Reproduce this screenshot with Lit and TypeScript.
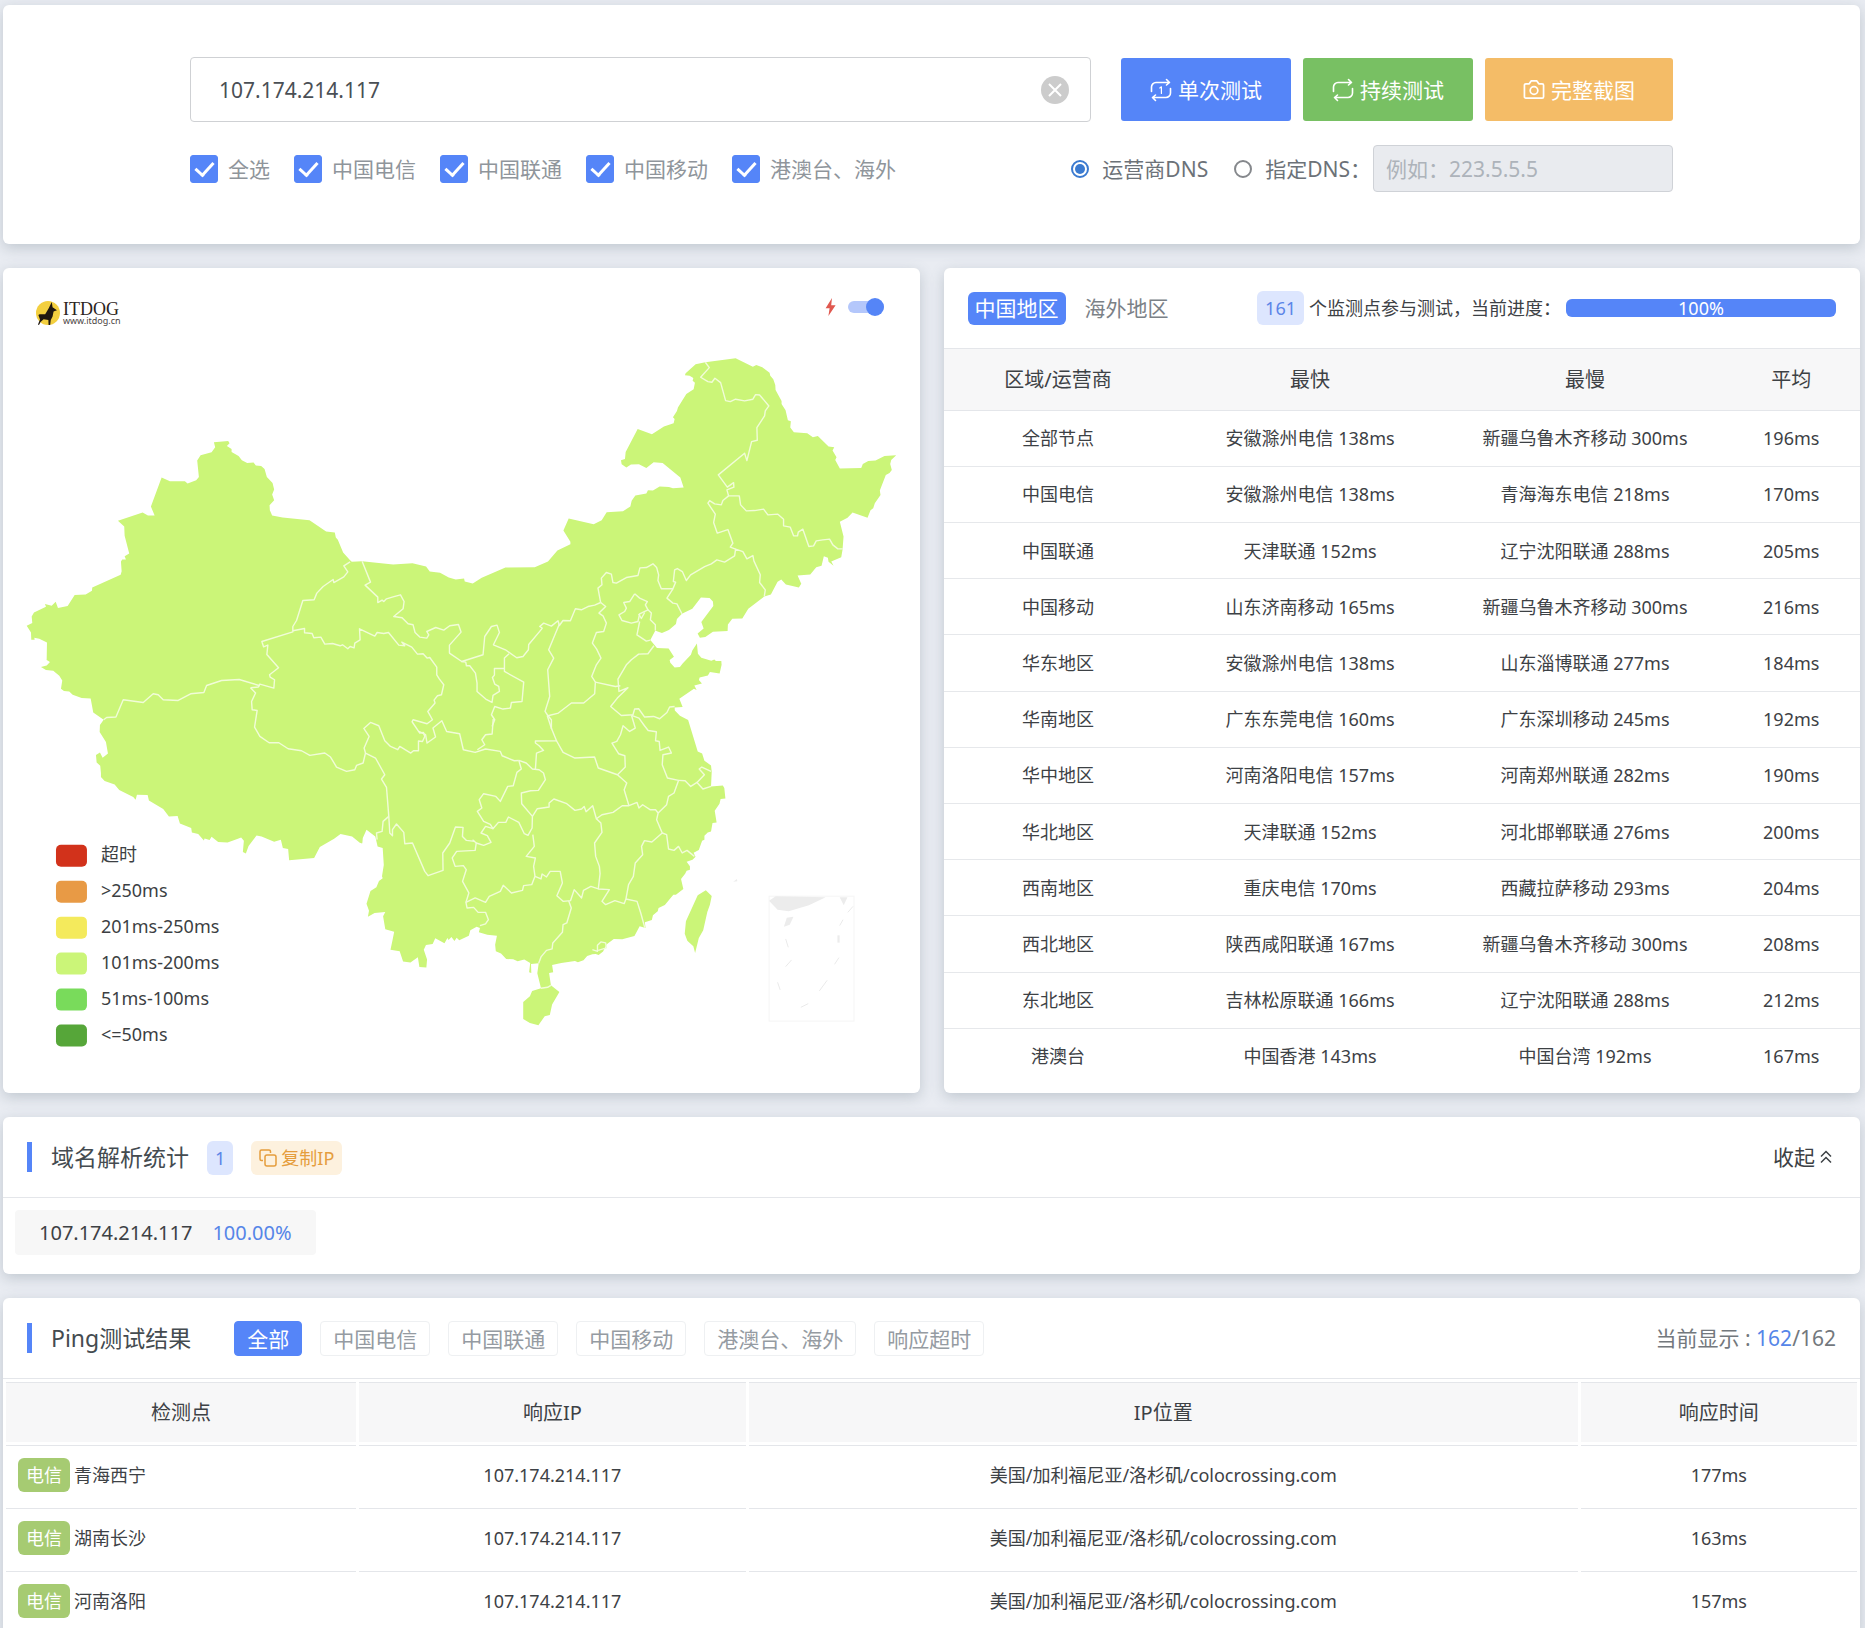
import { LitElement, html, svg, css } from "lit";
import { customElement, state } from "lit/decorators.js";

/* ---------- Map geometry: boundaries are digitised tile by tile ---------- */

interface Tile { x: number; y: number; sx: number; sy: number; }

const NW: Tile = { x: -3, y: -8, sx: 1 / 3, sy: 1 / 3 };
const NE: Tile = { x: 457, y: 62, sx: 1 / 3, sy: 1 / 3 };
const SW: Tile = { x: -3, y: 372, sx: 1 / 3, sy: 1 / 3 };
const SE: Tile = { x: 357, y: 412, sx: 1 / 2.7034, sy: 1 / 3 };

const trace = (t: Tile, points: string): string =>
  points
    .trim()
    .split(/\s+/)
    .map((p) => {
      const [x, y] = p.split(",").map(Number);
      return `${(t.x + x * t.sx).toFixed(1)},${(t.y + y * t.sy).toFixed(1)}`;
    })
    .join(" ");

const MAINLAND = [
  trace(NW, `140,1200 141,1148 118,1137 103,1134 104,1140 94,1140 93,1118 80,1098 97,1090 95,1070 102,1058
    138,1041 135,1033 155,1038 167,1026 174,1045 203,1039 224,1006 257,1004 276,993 277,983 362,945 365,934
    363,905 367,899 378,899 374,889 388,881 374,828 373,800 354,783 428,758 444,767 464,767 453,740 485,653
    510,664 555,664 563,671 589,661 597,651 592,602 602,586 635,577 646,562 642,547 685,543 689,550 681,558
    695,567 695,576 716,588 726,601 742,609 761,608 768,617 784,618 794,627 801,651 818,669 823,689 817,704
    823,721 809,736 810,751 817,767 848,773 929,781 979,815 1005,818 1008,833 1014,840 1030,878 1051,901
    1056,906 1087,904 1180,914 1238,910 1279,920 1290,935 1321,939 1347,953 1368,959 1393,956 1395,965 1419,971`),
  trace(NE, `39,761 66,744 137,713 225,712 265,695 293,662 332,643 332,636 311,602 327,566 402,583 426,571
    441,547 490,544 512,530 516,513 527,497 560,491 565,481 580,482 600,470 628,471 640,475 672,473 662,443
    609,399 582,397 560,414 538,403 514,404 500,413 486,403 484,391 496,387 498,366 534,297 577,313 613,290
    642,280 645,267 640,262 652,243 655,233 680,192 702,178 706,158 699,152 701,144 690,137 676,136 678,130
    708,103 737,97 828,85 880,110 890,105 908,112 930,128 932,137 941,148 947,165 948,180 966,213 966,222
    978,241 985,271 994,274 992,293 1003,307 1043,310 1060,322 1075,318 1107,350 1124,352 1119,362 1131,382
    1127,390 1141,416 1205,414 1210,402 1226,393 1248,392 1275,378 1310,376 1295,390 1292,402 1297,420
    1290,429 1279,435 1261,482 1263,495 1246,520 1241,535 1233,541 1224,564 1179,548 1164,564 1141,576
    1152,620 1149,660 1145,682 1115,695 1122,708 1107,696 1105,684 1093,679 1086,708 1070,712 1052,734
    1014,737 1025,762 1018,773 979,764 965,749 954,756 934,794 914,800 866,837 848,866 818,867 805,884
    804,904 760,906 737,922 721,924 714,911 732,896 725,877 761,829 760,815 750,805 724,803 698,837 667,852
    652,868 649,883 628,901 607,910 594,905 587,902 572,931 592,955 627,956 643,981 630,991 632,999 645,1013
    661,1012 669,1001 694,975 698,962 712,941 715,972 725,984 755,993 764,989 769,994 785,994 786,1005
    780,1031 751,1027 745,1037 720,1043 718,1051 727,1061 704,1067 711,1081 703,1077 659,1107 669,1132
    645,1133`),
  trace(SE, `852,92 866,108 888,121 914,215 926,221 932,243 950,257 952,275 950,320 982,317 986,325 989,356
    976,358 973,372 960,393 965,428 954,430 950,455 941,458 932,468 932,480 926,483 917,511 903,519 908,531
    900,540 884,546 893,560 893,570 884,573 880,582 869,598 875,628 855,645 848,645 825,676 808,685 806,695
    793,707 790,721 771,728 773,745 757,740 743,769 710,779 687,778 668,794 658,816 646,826 638,823 629,824
    615,829 605,842 590,848 582,844 545,850 520,856 523,878 512,880 517,917 540,937 520,975 514,1006 500,1010
    483,1037 460,1030 442,1018 442,967 460,950 466,934 490,926 480,881 484,851 463,853 464,880 458,878
    461,850 445,840 427,845 415,839 396,838 382,822 368,815 366,795 371,768 345,765 322,758 325,745 316,741
    299,752 295,768 269,782 262,774 256,784 248,772 240,781 237,775 229,791 204,776 197,793 179,796 173,810
    182,840 180,864 161,862 157,833 137,849 117,846 108,815 83,810 88,783 93,756 69,749 63,710 69,697 40,700
    22,711 25,693 18,672 29,634 45,623 52,604 62,596 60,590 65,556 62,505 48,500 42,470 18,450 8,475 7,488`),
  trace(SW, `1087,611 1080,609 1057,590 1022,583 1003,597 960,622 943,655 868,662 865,628 849,625 843,600
    823,606 785,590 770,587 746,619 738,641 729,637 732,603 724,593 706,600 683,608 655,607 635,591 629,601
    614,596 612,602 595,583 576,578 574,565 540,551 533,529 507,530 490,508 447,482 443,466 411,465 407,480
    400,472 358,451 344,434 314,424 303,412 303,400 301,378 290,368 288,346 300,338 308,354 324,341 318,307
    299,277 300,256 311,240 280,218 272,176 245,175 218,165 208,155 192,154 183,147 187,122 178,108 160,93
    138,91 123,82 140,77 150,67 139,60`),
].join(" ");

const TAIWAN = trace(SE, `936,632 952,649 947,675 940,697 929,752 917,775 907,820 902,800 886,783 879,762 882,725 914,647`);

const BORDERS: string[] = [
  ...[
    `1051,906 1032,918 1044,936 1032,951 1002,968 1000,959 970,980 951,1000 943,1020 909,1022 890,1082 879,1100 879,1116
     786,1145 791,1161 804,1156 801,1184 836,1224 809,1245 811,1252 824,1260 822,1285 780,1273 775,1282 752,1284`,
    `879,1113 914,1106 914,1119 937,1121 942,1134 963,1132 975,1153 998,1151 1021,1158 1028,1155 1044,1167 1051,1160
     1063,1164 1065,1150 1081,1140 1079,1107 1125,1129 1132,1118 1152,1121 1166,1118 1197,1156 1215,1158 1206,1147
     1236,1162 1253,1183 1270,1182 1282,1195 1290,1193 1311,1222 1311,1245 1319,1258 1332,1275 1325,1305 1313,1308
     1303,1321 1306,1330 1284,1355 1298,1380 1282,1392 1240,1380 1237,1386 1260,1420 1271,1418 1275,1430 1268,1445
     1256,1444 1256,1473 1241,1473 1233,1480 1200,1460 1194,1470 1172,1460 1155,1443 1137,1398 1112,1388 1092,1406
     1108,1430 1093,1465 1097,1480`,
    `1087,904 1112,967 1096,976 1134,1012 1134,1028 1147,1021 1152,1025 1160,1017 1180,1011 1202,1005 1213,1025
     1210,1047 1182,1070 1207,1074 1225,1092 1240,1095 1246,1118 1260,1132 1281,1135 1287,1125 1281,1115 1308,1103
     1332,1111 1350,1098 1376,1094 1384,1117 1349,1156 1349,1180 1386,1205 1450,1185 1455,1130 1475,1100 1492,1096
     1499,1118 1481,1155 1517,1170 1551,1194 1570,1190 1586,1170 1587,1154 1628,1105`,
  ].map((p) => trace(NW, p)),
  ...[
    `248,895 240,890 252,880 275,889 295,873 299,887 310,872 332,873 347,837 365,840 385,830 405,826 423,818`,
    `5,995 18,997 20,1008 30,1008 47,1030 52,1060 52,1085 78,1108 97,1118 100,1097 119,1085 117,1070 105,1063 98,1043
     104,1036 104,1016 134,1016`,
    `148,972 134,985 134,1025 192,1057 187,1115 155,1118 152,1135 130,1138 105,1130 95,1155 105,1170 97,1190`,
    `299,883 267,960 282,985 264,1020 270,1100 256,1145 265,1158 275,1170 275,1198`,
    `265,1158 296,1150 335,1120 372,1120 405,1092 407,1057 396,1040 410,1005 424,985 411,958 398,940 410,908
     432,905 440,880 430,858 418,850 438,830 423,818`,
    `407,1057 467,1070 482,1068`,
    `423,818 415,775 427,765 425,745 440,728 455,733 460,758 470,760 500,743 535,737 541,714 560,713 580,702
     591,713 597,735 595,752 605,777 640,777 648,757 641,755 645,720 653,716 668,725 680,752 693,735 735,710
     755,702 772,690 795,697 825,678 828,658 850,665 862,687 880,677 883,693 902,735 900,758 917,780 914,800`,
    `640,777 622,805 640,820 652,822 667,852`,
    `525,792 540,805 563,815 557,825 565,840 540,852 535,875 515,880 487,872 478,855 495,845 500,835 492,818
     510,815 525,792`,
    `565,840 575,850 572,870 587,885 587,902`,
    `540,875 532,915 560,934 572,931`,
    `537,852 545,866 555,848`,
    `828,658 812,652 820,640 805,599 773,610 762,578 767,553 745,520 750,512 765,522 785,525 790,512 807,498
     839,498 843,525 860,543 885,542 912,538 925,555 955,553 972,568 972,588 992,592 1002,618 1014,618
     1016,607 1030,598 1048,650 1062,648 1070,633 1090,630 1110,628 1120,645 1135,657 1150,657`,
    `807,498 802,480 823,472 822,458 803,472 776,435 855,370 862,392 876,335 893,331 892,293 915,258 917,243
     928,228 900,195 888,194 880,208 855,213 828,208 812,215 798,212 783,158 766,145 757,157 745,155 723,142
     749,113 737,97`,
    `583,948 565,972 537,973 515,990 500,1005 475,1048 478,1085 505,1074 473,1105 453,1130 485,1157 520,1155
     525,1138 537,1137 555,1162 582,1160 600,1167 622,1148 630,1132 645,1130`,
  ].map((p) => trace(NE, p)),
  ...[
    `311,240 320,233 348,232 370,180 430,188 460,162 475,165 490,180 535,182 572,162 612,158 620,137 665,122
     718,119 780,138`,
    `752,144 767,160 755,185 757,210 772,212 764,262 780,290 808,309 837,309 865,327 905,333 930,347 975,340
     992,352 1010,382 1040,395 1065,390 1070,377 1090,370 1097,340 1127,355 1155,405 1145,418 1160,443 1167,530
     1170,580 1178,588 1178,570 1190,553 1212,578 1215,612 1238,610 1275,695 1285,708 1330,692 1329,640
     1350,610 1367,562 1390,563 1388,590 1400,602 1425,605`,
    `1167,530 1150,545 1147,575 1130,580 1132,600`,
  ].map((p) => trace(SW, p)),
  ...[
    `160,155 178,165 182,190 205,172 198,145 222,123 235,155 270,162 280,210 312,218 340,208 380,215 385,228
     418,243 430,242`,
    `361,118 358,163 340,165 330,180 338,195 318,210`,
    `507,107 518,145 532,183 475,184 475,190 485,198 497,212 478,220 475,268`,
    `430,242 450,250 467,268 485,270 497,280 502,300 483,332 462,333 437,340 438,372 467,410 466,445 455,467
     445,462 430,428 402,412 395,428 375,428 360,447 353,434 335,425 318,395 330,385 323,360 335,342 368,350
     380,365 400,320 415,318 425,278 437,268 430,242`,
    `532,183 550,218 582,235 635,232 645,265 697,285 722,310 715,330 728,378`,
    `697,285 718,262 717,228 700,222 682,190 695,185 705,165 712,138 730,155 745,145 735,107`,
    `735,107 755,115 770,138 780,152 802,156 800,183 810,185 812,212 835,202 843,220 820,225 818,255 832,295
     862,302 850,340 835,350 830,375 807,400`,
    `862,302 880,303 895,320 912,308 928,328 950,320`,
    `912,308 932,285 918,268 925,262 950,275`,
    `467,410 480,387 512,382 512,370 525,358 560,372 582,392 600,388 607,380 612,396 630,378 640,417 655,405
     685,398 710,378 728,378 750,368 755,385 765,375 785,390 800,390 807,400 803,420 818,460 790,487 770,483
     762,500 765,525 745,550 740,590 727,615 720,658`,
    `640,417 652,430 655,458 635,490 638,530 648,560 650,582 645,628`,
    `468,465 472,500 450,530 475,535 470,560 474,590`,
    `474,590 490,598 493,583 505,592 515,575 542,575 548,610 533,648 550,665 570,663 580,630 600,655 605,632
     625,620 645,628 675,630 655,665 665,675 690,663 715,672 720,658 750,665 760,700 771,745`,
    `474,590 465,615 443,618 440,632 410,640 388,617 380,635 350,650 340,668 312,655 287,668 290,685 308,683
     320,698 340,698 348,720 340,733 325,738`,
    `287,668 295,640 278,605 288,570 280,558 258,560 250,535 262,515 312,512 315,490 335,497 355,488 345,468
     328,460 340,440 360,447`,
    `305,480 315,490`,
    `565,663 572,685 560,730 550,735 548,758 522,790 520,808 505,812 490,832 484,851`,
    `818,460 830,465 835,508 850,512 862,500 872,520 885,512 905,530`,
    `490,926 508,923 517,917`,
    `629,810 643,815 643,797 652,787 665,790 667,805 645,812`,
  ].map((p) => trace(SE, p)),
];

const INSET_SHAPES = [
  `1107,663 1125,650 1260,653 1215,677 1160,695 1130,690`,
  `1298,653 1319,653 1309,677`,
  `1155,714 1173,711 1163,735 1147,741`,
  `1292,767 1298,767 1298,789 1292,789`,
  `1020,598 1021,605 1010,606`,
].map((p) => trace(SE, p));

const INSET_DASHES = [
  `1334,680 1320,698`,
  `1307,720 1298,738`,
  `1296,834 1284,854`,
  `1264,902 1243,934`,
  `1213,972 1193,983`,
  `1130,908 1137,931`,
  `1152,778 1159,803`,
  `1168,841 1152,861`,
].map((p) => trace(SE, p));

const LEGEND: [string, string][] = [
  ["#d2321b", "超时"],
  ["#e89a45", ">250ms"],
  ["#f4ea5c", "201ms-250ms"],
  ["#cbf578", "101ms-200ms"],
  ["#79db5b", "51ms-100ms"],
  ["#56a639", "<=50ms"],
];

/* ---------- Elements ---------- */

@customElement("latency-map")
export class LatencyMap extends LitElement {
  static styles = css`
    :host { display: block; position: relative; }
    .map { display: block; width: 100%; height: auto; border-radius: 6px; }
    .land { fill: #cbf578; }
    .border { fill: none; stroke: #f1fcd8; stroke-width: 1.4; stroke-linejoin: round; }
    .inset { fill: none; stroke: #f5f5f5; }
    .sea { fill: #ececec; }
    .dash { fill: none; stroke: #eaeaea; }
    .label { font: 18px/1 "Noto Sans", "Noto Sans CJK SC", sans-serif; fill: #3c3f43; }
    .brand { font: 18px/1 "Liberation Serif", serif; fill: #2b2320; }
    .site { font: 9px/1 "Noto Sans", sans-serif; fill: #4a4442; }
    .fast {
      position: absolute; top: 28px; right: 36px;
      display: flex; align-items: center; gap: 12px; height: 21px;
    }
    .toggle {
      appearance: none; margin: 0; width: 36px; height: 12px; border-radius: 6px;
      background: #b4c7fb; display: flex; align-items: center; cursor: pointer;
    }
    .toggle::before {
      content: ""; width: 18px; height: 18px; border-radius: 50%; background: #5585f7; flex: none;
    }
    .toggle:checked { justify-content: flex-end; }
  `;

  render() {
    return html`
      <svg class="map" viewBox="0 0 917 825" role="img" aria-label="中国地区">
        <polygon class="land" points=${MAINLAND}></polygon>
        <polygon class="land" points=${TAIWAN}></polygon>
        ${BORDERS.map((p) => svg`<polyline class="border" points=${p}></polyline>`)}
        <rect class="inset" x="766.5" y="628.5" width="85" height="125"></rect>
        ${INSET_SHAPES.map((p) => svg`<polygon class="sea" points=${p}></polygon>`)}
        ${INSET_DASHES.map((p) => svg`<polyline class="dash" points=${p}></polyline>`)}
        ${LEGEND.map(
          ([color, text], i) => svg`
            <rect x="53" y=${577 + i * 36} width="31" height="22" rx="5" fill=${color}></rect>
            <text class="label" x="98" y=${593 + i * 36}>${text}</text>`
        )}
        <circle cx="45" cy="45" r="12" fill="#f3cf3f"></circle>
        <path
          d="M48.8 34 49.6 39.2 54 42.2 50.6 43.6 49.6 48.6 47.8 52 47.2 57 45.6 57 45.4 52 40.6 51.2 37.6 54 36 57 35 56.6 37 51.6 35.4 47 36.6 46.4 42.2 46.4 45.6 40.4Z"
          fill="#1f1710"
        ></path>
        <text class="brand" x="60" y="47">ITDOG</text>
        <text class="site" x="60" y="56">www.itdog.cn</text>
      </svg>
      <div class="fast">
        <svg width="11" height="18" viewBox="0 0 11 18" aria-hidden="true">
          <path d="M7 0 .6 10.2H4.6L3.4 18 10.6 7.2H6.2Z" fill="#e0584f"></path>
        </svg>
        <input class="toggle" type="checkbox" role="switch" aria-label="快速" checked />
      </div>
    `;
  }
}

const CARRIERS = ["全选", "中国电信", "中国联通", "中国移动", "港澳台、海外"];

const REGIONS = [
  ["全部节点", "安徽滁州电信 138ms", "新疆乌鲁木齐移动 300ms", "196ms"],
  ["中国电信", "安徽滁州电信 138ms", "青海海东电信 218ms", "170ms"],
  ["中国联通", "天津联通 152ms", "辽宁沈阳联通 288ms", "205ms"],
  ["中国移动", "山东济南移动 165ms", "新疆乌鲁木齐移动 300ms", "216ms"],
  ["华东地区", "安徽滁州电信 138ms", "山东淄博联通 277ms", "184ms"],
  ["华南地区", "广东东莞电信 160ms", "广东深圳移动 245ms", "192ms"],
  ["华中地区", "河南洛阳电信 157ms", "河南郑州联通 282ms", "190ms"],
  ["华北地区", "天津联通 152ms", "河北邯郸联通 276ms", "200ms"],
  ["西南地区", "重庆电信 170ms", "西藏拉萨移动 293ms", "204ms"],
  ["西北地区", "陕西咸阳联通 167ms", "新疆乌鲁木齐移动 300ms", "208ms"],
  ["东北地区", "吉林松原联通 166ms", "辽宁沈阳联通 288ms", "212ms"],
  ["港澳台", "中国香港 143ms", "中国台湾 192ms", "167ms"],
];

const FILTERS = ["全部", "中国电信", "中国联通", "中国移动", "港澳台、海外", "响应超时"];

const RESULTS = [
  ["青海西宁", "177ms"],
  ["湖南长沙", "163ms"],
  ["河南洛阳", "157ms"],
];

const IP = "107.174.214.117";

const loopIcon = (once: boolean) => html`
  <svg class="icon" width="22" height="24" viewBox="0 0 22 24" aria-hidden="true">
    <g fill="none" stroke="#fff" stroke-width="1.6" stroke-linecap="round" stroke-linejoin="round">
      <path d="M1.5 13.500V9a4.500 4.500 0 0 1 4.500-4.500H19M16.500 1.500 19.500 4.500 16.500 7"></path>
      <path d="M20.500 10.500V15a4.500 4.500 0 0 1-4.500 4.500H3M5.500 17 2.500 19.500 5.500 22.500"></path>
      ${once ? svg`<path d="M9.800 10 11.400 8.800V15.500" stroke-width="1.200"></path>` : ""}
    </g>
  </svg>
`;

@customElement("app-root")
export class AppRoot extends LitElement {
  @state() private filter = FILTERS[0];
  @state() private progress = 100;

  static styles = css`
    :host {
      display: flex; flex-direction: column; gap: 24px;
      box-sizing: border-box; height: 100vh; overflow: hidden;
      padding: 5px 5px 0 3px;
      background: #e9ecf2; color: #3d4145;
      font-family: "Noto Sans", "Noto Sans CJK SC", sans-serif;
      font-size: 18px; line-height: 28px;
    }
    * { box-sizing: border-box; }
    button, input { font: inherit; color: inherit; margin: 0; }
    button { cursor: pointer; border: 0; background: none; padding: 0; white-space: nowrap; }
    .card {
      flex: none; background: #fff; border-radius: 6px;
      box-shadow: 0 4px 14px rgba(100, 115, 130, 0.3);
    }

    .query { padding: 52px 187px; display: flex; flex-direction: column; gap: 23px; font-size: 21px; }
    .line { display: flex; align-items: center; }
    .target {
      flex: 1; display: flex; align-items: center; height: 65px; margin-right: 30px;
      padding: 0 21px 0 28px; border: 1px solid #cfd1d4; border-radius: 4px;
    }
    .address { flex: 1; min-width: 0; border: 0; outline: 0; padding: 0; background: none; color: #4a4f55; }
    .clear { display: flex; }
    .actions { display: flex; gap: 12px; }
    .action {
      display: flex; align-items: center; justify-content: center; gap: 6px;
      height: 63px; padding: 0 29px; border-radius: 3px; color: #fff;
    }
    .once { background: #5585f8; }
    .loop { background: #78c063; }
    .shot { background: #f4bc67; padding: 0 38px; }
    .options { justify-content: space-between; }
    .carriers { display: flex; gap: 24px; }
    .tick { display: flex; align-items: center; gap: 10px; color: #8f959b; }
    .box {
      appearance: none; width: 28px; height: 28px; border: 1px solid #5585f8; border-radius: 3px;
      display: grid; place-items: center;
    }
    .box:checked { background: #5585f8; }
    .box:checked::before {
      content: ""; width: 8px; height: 15px; margin-bottom: 4px;
      border: solid #fff; border-width: 0 3px 3px 0; transform: rotate(42deg);
    }
    .dns { display: flex; align-items: center; color: #6c7278; }
    .choice { display: flex; align-items: center; gap: 13px; margin-right: 26px; }
    .choice.last { margin-right: 2px; }
    .radio {
      appearance: none; width: 18px; height: 18px; border: 2px solid #85888c; border-radius: 50%;
      display: grid; place-items: center;
    }
    .radio:checked { border-color: #3a7ad0; }
    .radio:checked::before { content: ""; width: 10px; height: 10px; border-radius: 50%; background: #3a7ad0; }
    .server {
      width: 300px; height: 47px; padding: 0 12px; border: 1px solid #cfd2d7; border-radius: 4px;
      background: #e9ebef;
    }
    .server::placeholder { color: #adb3ba; opacity: 1; }

    .columns { flex: none; display: grid; grid-template-columns: 1fr 1fr; gap: 24px; }
    .summary { display: flex; flex-direction: column; padding-bottom: 9px; }
    .head {
      display: flex; align-items: center; height: 81px; padding: 0 24px;
      border-bottom: 1px solid #e4e6ea;
    }
    .tabs { display: flex; gap: 12px; font-size: 21px; flex: 1; }
    .tab { height: 33px; line-height: 33px; padding: 0 7px; border-radius: 6px; color: #7b8187; }
    .tab.on { background: #5585f8; color: #fff; }
    .count {
      height: 34px; line-height: 34px; padding: 0 8px; border-radius: 6px;
      background: #dde6fe; color: #5b85e8;
    }
    .status { display: flex; align-items: center; gap: 5px; }
    .track { width: 270px; height: 18px; border-radius: 6px; background: #e9ecef; }
    .fill {
      display: flex; align-items: center; justify-content: center; height: 100%;
      border-radius: 6px; background: #5585f8; color: #fff;
    }

    table { width: 100%; table-layout: fixed; text-align: center; }
    th { font-weight: 400; font-size: 20px; background: #f7f7f8; padding: 2px 0 0; }
    td { padding: 0; }
    .regions { flex: 1; border-collapse: collapse; }
    .regions th { height: 61px; border-bottom: 1px solid #e4e6ea; }
    .regions td { border-bottom: 1px solid #e6e8eb; }
    .regions tr:last-child td { border-bottom: 0; }
    .quarter { width: 25%; }
    .third { width: 30%; }
    .rest { width: 15%; }

    .bar { width: 5px; height: 30px; background: #5585f8; margin-right: 19px; }
    .title { margin: 0; font-size: 23px; font-weight: 400; color: #444b50; }
    .dnsstat .title { margin-right: 18px; }
    .dnsstat .count, .copy, .filters { margin-top: 2px; }
    .copy {
      display: flex; align-items: center; gap: 4px; height: 34px; margin-left: 18px; padding: 0 8px;
      border-radius: 6px; background: #fdf1de; color: #e59d3d;
    }
    .fold { margin-left: auto; margin-right: 4px; display: flex; align-items: center; gap: 5px; font-size: 21px; }
    .chips { padding: 12px 12px 19px; display: flex; font-size: 20px; }
    .chip { display: flex; gap: 20px; height: 45px; line-height: 45px; padding: 0 24px; border-radius: 4px; background: #f7f7f7; }
    .link { color: #5585e8; }

    .filters { display: flex; gap: 18px; margin-left: 43px; font-size: 21px; }
    .filter {
      height: 35px; padding: 0 12px; border: 1px solid #eef0f2; border-radius: 4px; color: #959ba2;
      display: flex; align-items: center;
    }
    .filter.on { background: #5585f8; border-color: #5585f8; color: #fff; }
    .shown { margin-left: auto; font-size: 21px; color: #73787d; }
    .results { border-spacing: 3px; }
    .results th, .results td { border-top: 1px solid #e4e6ea; height: 60px; }
    .w-node { width: 19%; }
    .w-ip { width: 21%; }
    .w-place { width: 45%; }
    .w-time { width: 15%; }
    .node { display: flex; align-items: center; gap: 4px; padding-left: 12px; }
    .isp { height: 34px; line-height: 34px; padding: 0 8px; border-radius: 6px; background: #a6cb72; color: #fff; }
    .icon { flex: none; display: block; }
  `;

  render() {
    return html`
      <section class="card query">
        <div class="line">
          <div class="target">
            <input class="address" type="text" aria-label="IP" .value=${IP} />
            <button class="clear" aria-label="清除">
              <svg class="icon" width="28" height="28" viewBox="0 0 28 28" aria-hidden="true">
                <circle cx="14" cy="14" r="14" fill="#ccc"></circle>
                <path d="M8 8 20 20M20 8 8 20" stroke="#fff" stroke-width="2"></path>
              </svg>
            </button>
          </div>
          <div class="actions">
            <button class="action once">${loopIcon(true)}单次测试</button>
            <button class="action loop">${loopIcon(false)}持续测试</button>
            <button class="action shot">
              <svg class="icon" width="22" height="22" viewBox="0 0 23 22" aria-hidden="true">
                <g fill="none" stroke="#fff" stroke-width="1.8" stroke-linejoin="round">
                  <path d="M3 4.500H6.500L8.500 1.500H14.500L16.500 4.500H20A1.500 1.500 0 0 1 21.500 6V18A1.500 1.500 0 0 1 20 19.500H3A1.500 1.500 0 0 1 1.500 18V6A1.500 1.500 0 0 1 3 4.500Z"></path>
                  <circle cx="11.500" cy="11.500" r="4"></circle>
                </g>
              </svg>完整截图
            </button>
          </div>
        </div>
        <div class="line options">
          <div class="carriers">
            ${CARRIERS.map(
              (name) => html`<label class="tick"><input class="box" type="checkbox" checked />${name}</label>`
            )}
          </div>
          <div class="dns">
            <label class="choice"><input class="radio" type="radio" name="dns" checked />运营商DNS</label>
            <label class="choice last"><input class="radio" type="radio" name="dns" />指定DNS：</label>
            <input class="server" type="text" aria-label="指定DNS" placeholder="例如：223.5.5.5" disabled />
          </div>
        </div>
      </section>

      <div class="columns">
        <section class="card"><latency-map></latency-map></section>
        <section class="card summary">
          <div class="head">
            <div class="tabs">
              <button class="tab on">中国地区</button>
              <button class="tab">海外地区</button>
            </div>
            <div class="status">
              <span class="count">161</span>
              <span>个监测点参与测试，当前进度：</span>
              <div class="track" role="progressbar" aria-label="当前进度" aria-valuenow=${this.progress}>
                <div class="fill" style="width:${this.progress}%">${this.progress}%</div>
              </div>
            </div>
          </div>
          <table class="regions">
            <thead>
              <tr>
                <th class="quarter">区域/运营商</th>
                <th class="third">最快</th>
                <th class="third">最慢</th>
                <th class="rest">平均</th>
              </tr>
            </thead>
            <tbody>
              ${REGIONS.map((row) => html`<tr>${row.map((cell) => html`<td>${cell}</td>`)}</tr>`)}
            </tbody>
          </table>
        </section>
      </div>

      <section class="card dnsstat">
        <div class="head">
          <span class="bar"></span>
          <h2 class="title">域名解析统计</h2>
          <span class="count">1</span>
          <button class="copy">
            <svg class="icon" width="18" height="18" viewBox="0 0 18 18" aria-hidden="true">
              <g fill="none" stroke="#e59d3d" stroke-width="1.500">
                <rect x="6" y="6" width="11" height="11" rx="2"></rect>
                <path d="M4 11.500H2.500A1.500 1.500 0 0 1 1 10V2.500A1.500 1.500 0 0 1 2.500 1H10A1.500 1.500 0 0 1 11.500 2.500V4"></path>
              </g>
            </svg>复制IP
          </button>
          <button class="fold">
            收起
            <svg class="icon" width="12" height="14" viewBox="0 0 12 14" aria-hidden="true">
              <path d="M1 6.500 6 1.500 11 6.500M1 12.500 6 7.500 11 12.500" fill="none" stroke="#3d4145" stroke-width="1.500"></path>
            </svg>
          </button>
        </div>
        <div class="chips">
          <div class="chip"><span>${IP}</span><span class="link">100.00%</span></div>
        </div>
      </section>

      <section class="card">
        <div class="head">
          <span class="bar"></span>
          <h2 class="title">Ping测试结果</h2>
          <div class="filters">
            ${FILTERS.map(
              (name) => html`<button
                class="filter ${name === this.filter ? "on" : ""}"
                @click=${() => (this.filter = name)}
              >${name}</button>`
            )}
          </div>
          <span class="shown">当前显示 : <span class="link">162</span>/162</span>
        </div>
        <table class="results">
          <thead>
            <tr>
              <th class="w-node">检测点</th>
              <th class="w-ip">响应IP</th>
              <th class="w-place">IP位置</th>
              <th class="w-time">响应时间</th>
            </tr>
          </thead>
          <tbody>
            ${RESULTS.map(
              ([city, time]) => html`<tr>
                <td><div class="node"><span class="isp">电信</span>${city}</div></td>
                <td>${IP}</td>
                <td>美国/加利福尼亚/洛杉矶/colocrossing.com</td>
                <td>${time}</td>
              </tr>`
            )}
          </tbody>
        </table>
      </section>
    `;
  }
}
